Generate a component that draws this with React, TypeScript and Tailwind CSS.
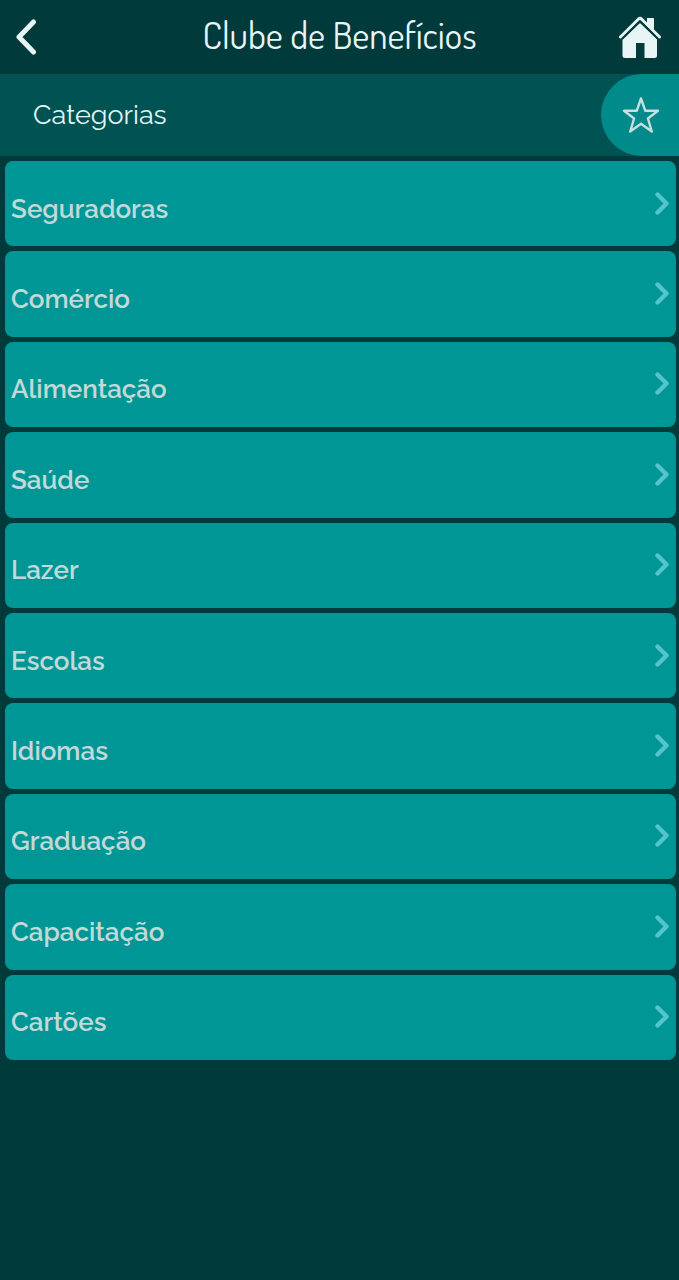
const categories = [
  'Seguradoras',
  'Comércio',
  'Alimentação',
  'Saúde',
  'Lazer',
  'Escolas',
  'Idiomas',
  'Graduação',
  'Capacitação',
  'Cartões',
];

function BackIcon() {
  return (
    <svg viewBox="0 0 24 40" className="h-10 w-6" fill="none" stroke="currentColor" strokeWidth={5} strokeLinecap="round" strokeLinejoin="round" aria-hidden="true">
      <path d="M17.500 5 L3 20 L17.500 35" />
    </svg>
  );
}

function HomeIcon() {
  return (
    <svg viewBox="0 0 44 44" className="size-11" fill="currentColor" aria-hidden="true">
      <path d="M28 3 H34 Q35 3 35 4 V17 L28 9.500 Z" />
      <path d="M1.500 22 L19.500 4 Q21 2.800 22.500 4 L40.500 22" fill="none" stroke="currentColor" strokeWidth={3} strokeLinecap="round" />
      <path d="M21 7.500 L38 24 V40.500 Q38 43 35.500 43 H25.500 V28 H17 V43 H6 Q3.500 43 3.500 40.500 V24 Z" />
      <path d="M3 24 L19.500 8 Q21 6.800 22.500 8 L39 24" fill="none" stroke="#003a3b" strokeWidth={1.8} />
    </svg>
  );
}

function StarIcon() {
  return (
    <svg viewBox="0 0 40 38" className="h-[38px] w-10" fill="none" stroke="currentColor" strokeWidth={2.4} strokeLinejoin="round" aria-hidden="true">
      <path d="M20 2.500 L24.300 14.800 H37 L26.900 22.500 L30.800 35.500 L20 27.800 L9.200 35.500 L13.100 22.500 L3 14.800 H15.700 Z" />
    </svg>
  );
}

function ChevronIcon() {
  return (
    <svg viewBox="0 0 16 24" className="h-6 w-4 shrink-0 text-[#55c5cc]" fill="none" stroke="currentColor" strokeWidth={4.4} strokeLinecap="round" strokeLinejoin="round" aria-hidden="true">
      <path d="M3.500 2.500 L12.500 11.500 L3.500 20.500" />
    </svg>
  );
}

function CategoryRow({ label }: { label: string }) {
  return (
    <li className="flex">
      <a href="#" className="flex w-full items-center justify-between rounded-lg bg-[#009696] px-1.5">
        <span className="pt-2.5 text-[26px] leading-8 font-semibold text-[#c2d9d7]">{label}</span>
        <ChevronIcon />
      </a>
    </li>
  );
}

export default function App() {
  return (
    <div className="min-h-screen bg-[#003a3b] font-['Raleway','Inter',sans-serif]">
      <header className="flex h-[74px] items-center justify-between px-4 text-[#e8f5f6]">
        <button type="button" aria-label="Voltar" className="flex w-11">
          <BackIcon />
        </button>
        <h1 className="pb-1 font-['Dosis','Roboto',sans-serif] text-[37px] leading-10 font-normal">Clube de Benefícios</h1>
        <button type="button" aria-label="Início">
          <HomeIcon />
        </button>
      </header>

      <div className="flex h-[82px] items-center justify-between bg-[#005253] pl-[33px]">
        <h2 className="text-[27px] leading-8 text-[#e0f7f7]">Categorias</h2>
        <button type="button" aria-label="Favoritos" className="flex h-full w-[78px] items-center justify-center rounded-l-full bg-[#008a8a] pl-0.5 text-[#c8dedf]">
          <StarIcon />
        </button>
      </div>

      <ul className="mt-[5px] mr-[3px] ml-[5px] grid min-h-[899px] auto-rows-fr gap-[5px]">
        {categories.map((label) => (
          <CategoryRow key={label} label={label} />
        ))}
      </ul>
    </div>
  );
}
